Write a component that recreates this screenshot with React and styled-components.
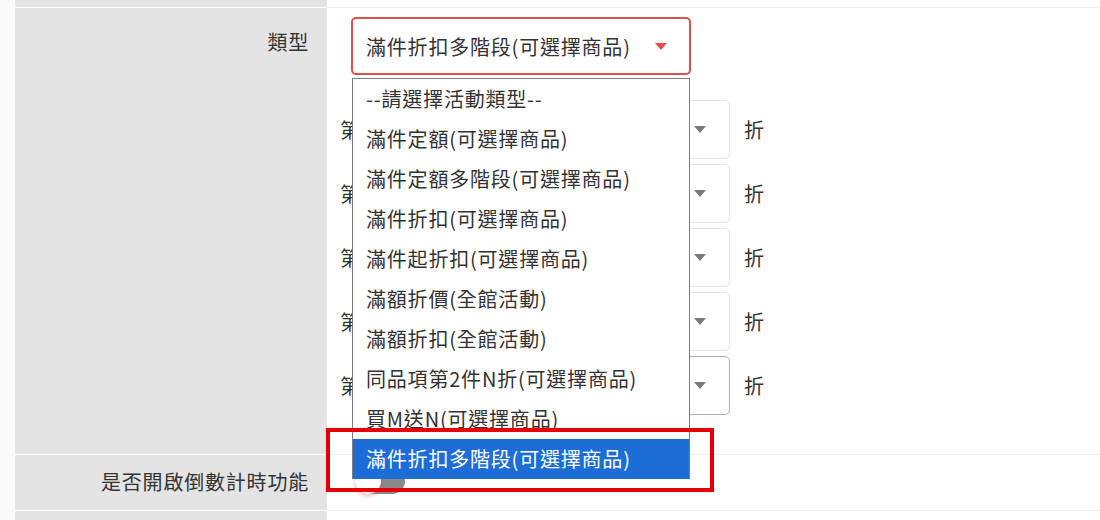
import React from 'react';
import styled, { createGlobalStyle } from 'styled-components';

const GlobalStyle = createGlobalStyle`
  html, body {
    margin: 0;
    padding: 0;
    background: #fafafa;
  }
  body {
    font-family: "Noto Sans CJK TC", "Liberation Sans", sans-serif;
    color: #333;
    letter-spacing: 0.8px;
  }
`;

const Form = styled.div`
  margin-left: 15px;
  width: 1085px;
  height: 520px;
  overflow: hidden;
  background: #fff;
`;

const Row = styled.div`
  display: grid;
  grid-template-columns: 312px 1fr;
  height: ${p => p.height}px;
  border-bottom: 1px solid #eee;
`;

const Label = styled.div`
  background: #e4e4e4;
  border-bottom: 1px solid #fff;
  margin-bottom: -1px;
  text-align: right;
  padding: ${p => p.top}px 18px 0 0;
  font-size: 20px;
  line-height: 28px;
  box-sizing: border-box;
`;

const Content = styled.div`
  padding: ${p => p.top || 0}px 0 0 ${p => p.left || 24}px;
  box-sizing: border-box;
`;

const SelectWrap = styled.div`
  position: relative;
  width: 340px;
`;

const MainSelect = styled.div`
  display: flex;
  align-items: center;
  justify-content: space-between;
  height: 58px;
  box-sizing: border-box;
  border: 2px solid #dd4f4a;
  border-radius: 5px;
  padding: 0 22px 0 13px;
  font-size: 20px;
`;

const Caret = styled.span`
  flex-shrink: 0;
  width: 0;
  height: 0;
  border-left: 6px solid transparent;
  border-right: 6px solid transparent;
  border-top: 7px solid ${p => p.color};
`;

const Tiers = styled.div`
  display: flex;
  flex-direction: column;
  gap: 5px;
  margin: 25px 0 0 -11px;
`;

const TierRow = styled.div`
  display: flex;
  align-items: center;
  font-size: 20px;
`;

const TierLabel = styled.span`
  width: 100px;
  flex-shrink: 0;
`;

const TierSelect = styled.div`
  display: flex;
  align-items: center;
  justify-content: flex-end;
  flex-shrink: 0;
  width: 280px;
  height: 59px;
  margin-left: 10px;
  box-sizing: border-box;
  border: 1px solid ${p => (p.active ? '#b0b0b0' : '#e4e4e4')};
  border-radius: 5px;
  padding-right: 23px;
`;

const Unit = styled.span`
  margin-left: 14px;
`;

const Dropdown = styled.ul`
  position: absolute;
  top: 61px;
  left: 1px;
  width: 338px;
  margin: 0;
  padding: 0;
  list-style: none;
  background: #fff;
  border: 1px solid #7d7d7d;
  border-bottom: none;
  box-sizing: border-box;
  z-index: 2;
`;

const Option = styled.li`
  height: 40px;
  line-height: 40px;
  padding-left: 13px;
  font-size: 20px;
  white-space: nowrap;
  color: ${p => (p.selected ? '#fff' : '#333')};
  background: ${p => (p.selected ? '#1c6ed6' : '#fff')};
`;

const Highlight = styled.div`
  position: absolute;
  left: -25px;
  top: 411px;
  width: 388px;
  height: 64px;
  box-sizing: border-box;
  border: 4px solid #e60000;
  z-index: 3;
`;

const Switch = styled.div`
  position: relative;
  width: 50px;
  height: 26px;
  margin-top: 12px;
  border-radius: 13px;
  background: #8a8a8a;
`;

const Knob = styled.span`
  position: absolute;
  left: 0;
  top: 0;
  width: 26px;
  height: 26px;
  border-radius: 50%;
  background: #fff;
  box-shadow: 0 2px 4px rgba(220, 60, 60, 0.35);
`;

const options = [
  '--請選擇活動類型--',
  '滿件定額(可選擇商品)',
  '滿件定額多階段(可選擇商品)',
  '滿件折扣(可選擇商品)',
  '滿件起折扣(可選擇商品)',
  '滿額折價(全館活動)',
  '滿額折扣(全館活動)',
  '同品項第2件N折(可選擇商品)',
  '買M送N(可選擇商品)',
  '滿件折扣多階段(可選擇商品)'
];

const tiers = [1, 2, 3, 4, 5];
const selectedIndex = options.length - 1;

export default function App() {
  return (
    <>
      <GlobalStyle />
      <Form>
        <Row height={7}>
          <Label top={0} />
          <Content />
        </Row>
        <Row height={446}>
          <Label top={20}>類型</Label>
          <Content top={9}>
            <SelectWrap>
              <MainSelect>
                <span>{options[selectedIndex]}</span>
                <Caret color='#e0504a' />
              </MainSelect>
              <Dropdown>
                {options.map((o, i) => (
                  <Option key={o} selected={i === selectedIndex}>
                    {o}
                  </Option>
                ))}
              </Dropdown>
              <Highlight />
            </SelectWrap>
            <Tiers>
              {tiers.map(n => (
                <TierRow key={n}>
                  <TierLabel>第{n}階段</TierLabel>
                  <TierSelect active={n === 5}>
                    <Caret color='#7a7a7a' />
                  </TierSelect>
                  <Unit>折</Unit>
                </TierRow>
              ))}
            </Tiers>
          </Content>
        </Row>
        <Row height={55}>
          <Label top={13}>是否開啟倒數計時功能</Label>
          <Content top={1} left={28}>
            <Switch>
              <Knob />
            </Switch>
          </Content>
        </Row>
        <Row height={20}>
          <Label top={0} />
          <Content />
        </Row>
      </Form>
    </>
  );
}
